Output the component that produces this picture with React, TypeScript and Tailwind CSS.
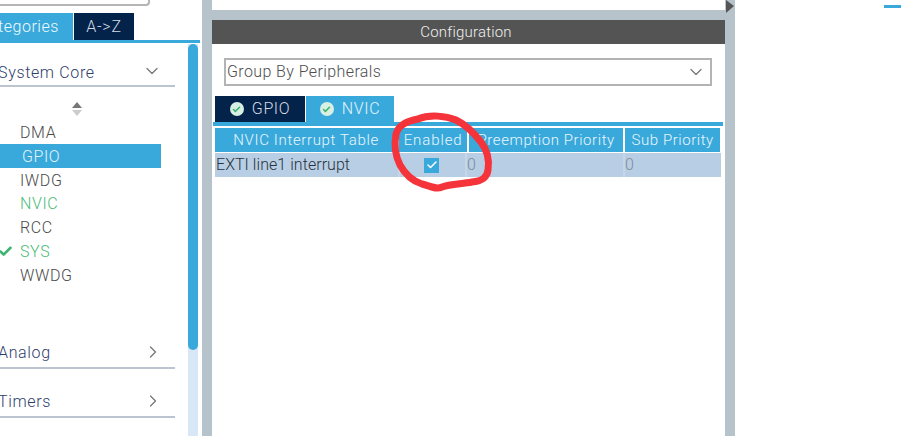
import { ChevronDown, ChevronRight, Check } from 'lucide-react';

const font = { fontFamily: 'Roboto, sans-serif' };

function TabCheck() {
  return (
    <span className="flex h-[14px] w-[14px] items-center justify-center rounded-full bg-[#d8efe4]">
      <Check size={9} strokeWidth={4} className="text-[#3cb371]" />
    </span>
  );
}

function Peripheral({ name, green, selected, checked, lift }: { name: string; green?: boolean; selected?: boolean; checked?: boolean; lift?: boolean }) {
  return (
    <div
      className={`relative flex h-[24px] w-[161px] items-center pl-[20px] text-[16px] font-light leading-none tracking-[0.6px] ${lift ? '' : 'pt-[1px]'} ${
        selected ? 'bg-[#39a9dc] pl-[22px] text-[#e4f3fb]' : green ? 'text-[#4dbb78]' : 'text-[#4a4a4a]'
      }`}
    >
      {checked && <Check size={15} strokeWidth={4} className="absolute left-[-2px] top-[4px] text-[#3cb371]" />}
      {name}
    </div>
  );
}

function Category({ name, open, className }: { name: string; open?: boolean; className?: string }) {
  return (
    <div className={`flex h-[30px] w-[175px] items-center justify-between border-b-2 border-[#bcc4cf] pr-[14px] text-[16px] font-light leading-none tracking-[0.65px] text-[#2f3d6b] ${className ?? ''}`}>
      <span className={`-ml-[2px] ${open ? 'mt-[3px]' : ''}`}>{name}</span>
      {open ? <ChevronDown size={20} strokeWidth={1.5} className="-mr-[1px] text-[#777]" /> : <ChevronRight size={20} strokeWidth={1.5} className="-mr-[2px] -mt-[2px] text-[#777]" />}
    </div>
  );
}

function HeaderCell({ label, className }: { label: string; className: string }) {
  return (
    <div className={`flex h-[24px] items-center justify-center bg-[#39a9dc] pt-[1px] text-[15px] font-light leading-none text-[#eaf6fc] ${className}`}>
      {label}
    </div>
  );
}

export default function App() {
  return (
    <div style={font} className="relative flex h-[436px] w-[901px] overflow-hidden bg-white">
      <aside className="flex w-[198px] shrink-0 flex-col">
        <div className="h-[6px] w-[150px] rounded-br-sm border-b-2 border-r-2 border-[#b5b5b5]" />
        <div className="mt-[7px] flex h-[27px] w-[198px] items-stretch gap-[1px] text-[16px] font-light leading-none">
          <div className="flex w-[73px] items-center justify-end overflow-hidden whitespace-nowrap bg-[#39a9dc] pr-[14px] tracking-[0.55px] text-[#f0f9fd]">
            Categories
          </div>
          <div className="flex w-[60px] items-center justify-center bg-[#03234b] tracking-[0.8px] text-[#d5dbe2]">A-&gt;Z</div>
        </div>
        <div className="h-[3px] w-[200px] bg-[#39a9dc]" />
        <div className="flex min-h-0 flex-1 pt-[1px]">
          <div className="w-[188px] shrink-0 overflow-hidden">
            <Category name="System Core" open className="mt-[13px]" />
            <div className="flex h-[24px] w-[154px] items-center justify-center pt-[20px]">
              <svg width="12" height="14" viewBox="0 0 12 14">
                <path d="M6 0 L11 6 H1 Z" fill="#777" />
                <path d="M6 14 L11 8 H1 Z" fill="#ccc" />
              </svg>
            </div>
            <div className="mt-[9px]">
              <Peripheral name="DMA" />
              <Peripheral name="GPIO" selected />
              <Peripheral name="IWDG" />
              <Peripheral name="NVIC" green lift />
              <Peripheral name="RCC" lift />
              <Peripheral name="SYS" green checked lift />
              <Peripheral name="WWDG" lift />
            </div>
            <Category name="Analog" className="mt-[51px]" />
            <Category name="Timers" className="mt-[19px]" />
          </div>
          <div className="w-[10px] shrink-0 bg-[#d7e7f5]">
            <div className="h-[306px] rounded-full bg-[#39a9dc]" />
          </div>
        </div>
      </aside>

      <div className="ml-[4px] w-[10px] shrink-0 bg-[#b7c3ca]" />

      <main className="flex w-[513px] shrink-0 flex-col">
        <div className="h-[10px] bg-white" />
        <div className="h-[10px] bg-[#b7c3ca]" />
        <div className="flex h-[24px] items-center justify-center bg-[#535453] pt-[1px] text-[15px] font-light leading-none tracking-[0.2px] text-[#f0f0f0]">
          <span className="-ml-[5px]">Configuration</span>
        </div>
        <div className="ml-[12px] mt-[14px] flex h-[28px] w-[488px] items-center justify-between border-2 border-[#b4b4b4] pl-[1px] pr-[4px] text-[16px] font-light leading-none tracking-[0.4px] text-[#4e4e4e]">
          Group By Peripherals
          <ChevronDown size={20} strokeWidth={1.5} className="text-[#777]" />
        </div>
        <div className="ml-[3px] mt-[10px] flex h-[26px] items-stretch gap-[1px] text-[16px] font-light leading-none tracking-[0.6px]">
          <div className="flex w-[90px] items-center justify-center gap-[8px] bg-[#03234b] text-[#d5dbe2]">
            <TabCheck />
            GPIO
          </div>
          <div className="flex w-[88px] items-center justify-center gap-[8px] bg-[#39a9dc] text-[#e4f4fb]">
            <TabCheck />
            NVIC
          </div>
        </div>
        <div className="ml-[1px] h-[4px] w-[510px] bg-[#39a9dc]" />
        <div className="ml-[3px] mt-[2px] flex w-[505px] gap-[2px]">
          <HeaderCell label="NVIC Interrupt Table" className="w-[183px] tracking-[0.65px]" />
          <HeaderCell label="Enabled" className="w-[68px] tracking-[0.9px]" />
          <HeaderCell label="Preemption Priority" className="w-[155px] tracking-[0.58px]" />
          <HeaderCell label="Sub Priority" className="w-[95px] tracking-[0.55px]" />
        </div>
        <div className="ml-[3px] mt-[1px] flex h-[24px] w-[506px] bg-[#b8cee4] text-[16px] font-light leading-none">
          <div className="flex w-[183px] items-center pl-[1px] tracking-[0.05px] text-[#2b323c]">EXTI line1 interrupt</div>
          <div className="flex w-[67px] items-center justify-center border-l-2 border-[#c6d6e6] pr-[2px]">
            <span className="flex h-[15px] w-[15px] items-center justify-center bg-[#39a9dc]">
              <Check size={12} strokeWidth={3} className="text-white" />
            </span>
          </div>
          <div className="flex w-[158px] items-center border-l-2 border-[#c6d6e6] text-[#7f8b98]">0</div>
          <div className="flex flex-1 items-center border-l-2 border-[#c6d6e6] text-[#7f8b98]">0</div>
        </div>
      </main>

      <div className="relative w-[10px] shrink-0 bg-[#b7c3ca]">
        <svg className="absolute left-0 top-0" width="10" height="14" viewBox="0 0 10 14">
          <path d="M1 0 L9 6 L1 13 Z" fill="#555" />
        </svg>
      </div>

      <div className="flex-1 pt-[5px]">
        <div className="ml-[149px] h-[3px] w-[17px] bg-[#39a9dc]" />
      </div>

      {/* marker scribble drawn over the screenshot */}
      <svg className="pointer-events-none absolute left-0 top-0" width="901" height="436" viewBox="0 0 901 436" fill="none">
        <path
          d="M418 119 C430 114 446 116 456 120 C466 125 474 133 481 142 C487 150 490 158 488 170 C487 178 482 181 472 182 C462 184 450 184 442 187 C436 190 430 186 422 184 C412 181 405 174 400 165 C396 157 394 145 396 134 C399 124 408 121 418 119 Z"
          stroke="#f5333b"
          strokeWidth="7"
          strokeLinejoin="round"
        />
      </svg>
    </div>
  );
}
